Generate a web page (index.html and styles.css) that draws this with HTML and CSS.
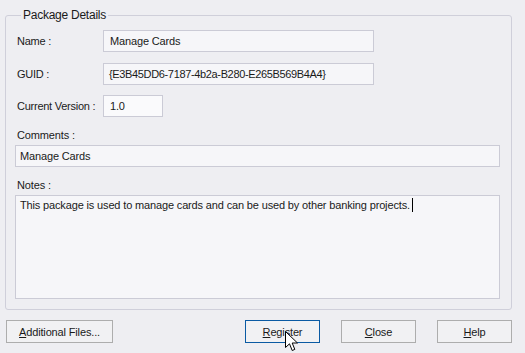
FILE: index.html
```html
<!DOCTYPE html>
<html>
<head>
    <meta charset="utf-8" />
    <title>Package Details</title>
    <link rel="stylesheet" href="styles.css">
</head>
<body>

<div class="dialog">
    <fieldset class="group">
        <legend>Package Details</legend>
        <div class="row row-name">
            <label class="lbl">Name :</label>
            <div class="field field-wide">Manage Cards</div>
        </div>
        <div class="row row-guid">
            <label class="lbl">GUID :</label>
            <div class="field field-wide guid">{E3B45DD6-7187-4b2a-B280-E265B569B4A4}</div>
        </div>
        <div class="row row-ver">
            <label class="lbl">Current Version :</label>
            <div class="field field-short">1.0</div>
        </div>
        <div class="block-lbl">Comments :</div>
        <div class="field field-full">Manage Cards</div>
        <div class="block-lbl">Notes :</div>
        <div class="field notes">This package is used to manage cards and can be used by other banking projects.<span class="caret"></span></div>
    </fieldset>

    <div class="buttons">
        <button class="btn btn-files"><u>A</u>dditional Files...</button>
        <div class="spacer"></div>
        <button class="btn btn-focus"><u>R</u>egister</button>
        <button class="btn"><u>C</u>lose</button>
        <button class="btn"><u>H</u>elp</button>
    </div>

    <!-- mouse pointer over Register -->
    <svg class="pointer" width="14" height="22" viewBox="0 0 14 22">
        <path d="M0.5 0.5 L0.5 16.5 L4.5 12.8 L7.2 19.5 L9.8 18.4 L7.2 12 L12.5 12 Z" fill="#fff" stroke="#000" stroke-width="1"/>
    </svg>
</div>

</body>
</html>
```

FILE: styles.css
```css
body, html {
    margin: 0;
    padding: 0;
    width: 100%;
    height: 100%;
    overflow: hidden;
    background-color: #eeeef2;
    font-family: "Liberation Sans", Arial, sans-serif;
    font-size: 11px;
    letter-spacing: -0.15px;
    color: #1a1a1a;
}
.dialog {
    position: relative;
    width: 525px;
    height: 353px;
    box-sizing: border-box;
    padding: 8px 13px 0 5px;
}
.group {
    margin: 0;
    height: 302px;
    box-sizing: border-box;
    border: 1px solid #cfcfda;
    border-radius: 3px;
    padding: 0 10px 0 9px;
}
.group legend {
    padding: 0 2px;
    margin-left: 6px;
    line-height: 14px;
    font-size: 12px;
    letter-spacing: -0.25px;
}
.row {
    display: flex;
    align-items: center;
    height: 22px;
}
.row-name { margin-top: 8px; }
.row-guid { margin-top: 11px; }
.row-ver { margin-top: 10px; }
.lbl {
    width: 86px;
    padding-left: 2px;
    white-space: nowrap;
    letter-spacing: -0.25px;
}
.field {
    box-sizing: border-box;
    background-color: #f6f6f9;
    border: 1px solid #cbcbd6;
    padding: 0 6px;
    line-height: 20px;
    height: 22px;
    white-space: nowrap;
}
.field-wide { width: 271px; }
.guid { letter-spacing: -0.35px; padding-left: 5px; }
.field-short { width: 60px; background-color: #fafafc; }
.block-lbl {
    margin-top: 8px;
    height: 20px;
    line-height: 20px;
    padding-left: 2px;
}
.field-full {
    width: 485px;
    margin-top: 0;
    height: 22px;
    padding-left: 4px;
}
.notes {
    width: 485px;
    height: 104px;
    padding: 1px 4px;
    line-height: 16px;
}
.caret {
    display: inline-block;
    width: 1px;
    height: 14px;
    background: #000;
    vertical-align: -3px;
    margin-left: 2px;
}
.buttons {
    display: flex;
    gap: 21px;
    margin-top: 10px;
    padding-left: 1px;
    margin-right: 0;
}
.spacer { flex: 1; }
.btn {
    box-sizing: border-box;
    height: 23px;
    width: 75px;
    margin: 0;
    padding: 0;
    font-family: inherit;
    font-size: 11px;
    letter-spacing: inherit;
    color: #1a1a1a;
    background-color: #f1f1f3;
    border: 1px solid #adadad;
}
.btn-files { width: 107px; }
.btn-focus { border-color: #0a5aa3; }
.pointer {
    position: absolute;
    left: 285px;
    top: 331px;
}
```
